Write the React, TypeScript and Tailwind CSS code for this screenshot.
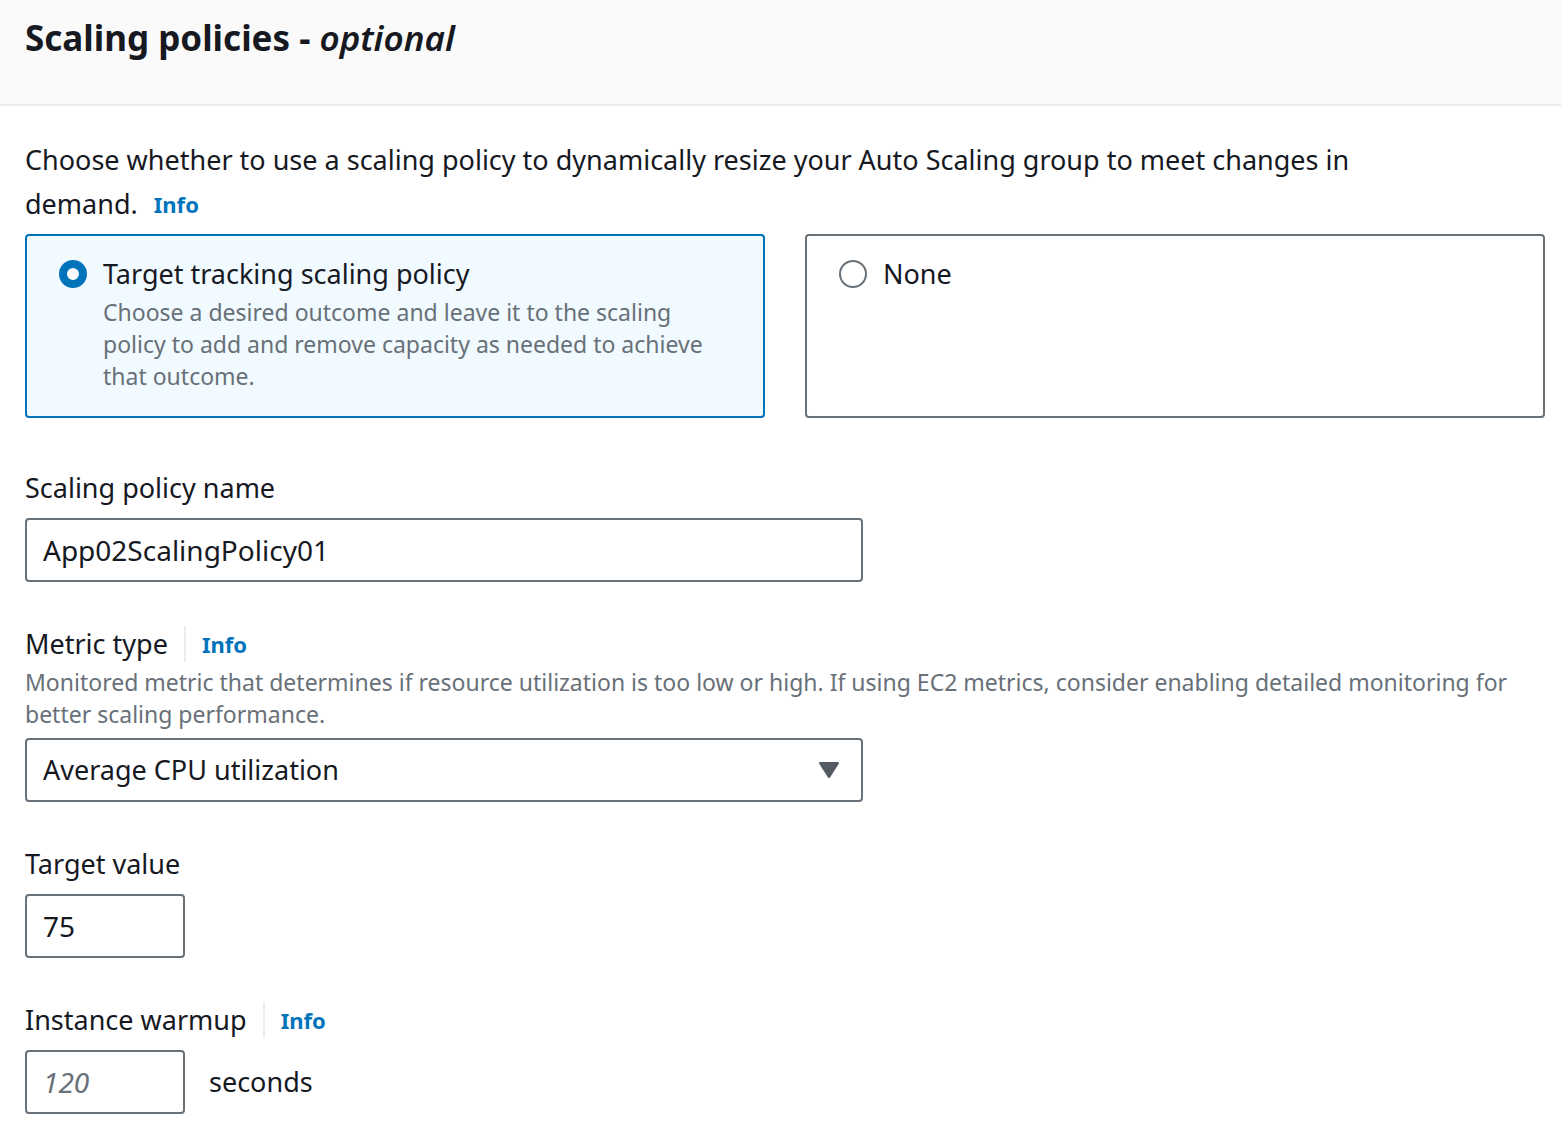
import type { ReactNode } from "react";

const fieldBox =
  "block h-16 rounded-sm border-2 border-[#687078] bg-white px-4 text-[#16191f] outline-none placeholder:text-[#687078] placeholder:italic focus-visible:border-[#0073bb]";

function Info({ topic }: { topic: string }) {
  return (
    <a href={`#${topic}`} className="inline-block text-[22px] font-bold text-[#0073bb] hover:underline">
      Info
    </a>
  );
}

function LabelRow({ htmlFor, topic, children }: { htmlFor: string; topic?: string; children: ReactNode }) {
  return (
    <div className="flex items-center gap-4">
      <label htmlFor={htmlFor}>{children}</label>
      {topic && (
        <div className="flex h-9 items-center border-l-2 border-[#eaeded] pl-4">
          <Info topic={topic} />
        </div>
      )}
    </div>
  );
}

function PolicyOption({
  id,
  title,
  description,
  defaultChecked,
}: {
  id: string;
  title: string;
  description?: string;
  defaultChecked?: boolean;
}) {
  return (
    <label
      htmlFor={id}
      className="flex gap-4 rounded-sm border-2 border-[#687078] px-8 pt-4 pb-6 has-checked:border-[#0073bb] has-checked:bg-[#f1faff]"
    >
      <input
        type="radio"
        name="policy"
        id={id}
        defaultChecked={defaultChecked}
        className="mt-2 size-7 shrink-0 appearance-none rounded-full border-2 border-[#687078] bg-white checked:border-8 checked:border-[#0073bb]"
      />
      <span>
        <span className="block">{title}</span>
        {description && <span className="block text-[23px] leading-8 text-[#687078]">{description}</span>}
      </span>
    </label>
  );
}

export default function App() {
  return (
    <main className="bg-white pb-1 font-['Noto_Sans',sans-serif] text-[27px] leading-11 text-[#16191f]">
      <header className="border-b-2 border-[#eaeded] bg-[#fafafa] px-[25px] pt-4 pb-11">
        <h1 className="text-[35px] leading-11 font-bold">
          Scaling policies - <em className="font-semibold">optional</em>
        </h1>
      </header>
      <form className="flex flex-col gap-10 pt-8 pr-4 pl-[25px]">
        <section className="mb-2">
          <p id="policy-question" className="max-w-[1400px]">
            Choose whether to use a scaling policy to dynamically resize your Auto Scaling group to meet changes in{" "}
            <span className="inline-flex gap-4 align-top">
              <span>demand.</span>
              <Info topic="scaling-policy" />
            </span>
          </p>
          <div role="radiogroup" aria-labelledby="policy-question" className="mt-2 grid grid-cols-2 gap-10">
            <PolicyOption
              id="tracking"
              title="Target tracking scaling policy"
              description="Choose a desired outcome and leave it to the scaling policy to add and remove capacity as needed to achieve that outcome."
              defaultChecked
            />
            <PolicyOption id="none" title="None" />
          </div>
        </section>

        <div className="flex flex-col gap-2">
          <LabelRow htmlFor="name">Scaling policy name</LabelRow>
          <input
            id="name"
            type="text"
            defaultValue="App02ScalingPolicy01"
            className={`${fieldBox} w-full max-w-[838px] text-[28px]`}
          />
        </div>

        <div className="flex flex-col gap-2">
          <div>
            <LabelRow htmlFor="metric" topic="metric-type">
              Metric type
            </LabelRow>
            <p id="metric-hint" className="text-[23px] leading-8 text-[#687078]">
              Monitored metric that determines if resource utilization is too low or high. If using EC2 metrics,
              consider enabling detailed monitoring for better scaling performance.
            </p>
          </div>
          <div className="relative w-full max-w-[838px]">
            <select id="metric" aria-describedby="metric-hint" className={`${fieldBox} w-full appearance-none`}>
              <option>Average CPU utilization</option>
            </select>
            <svg
              aria-hidden="true"
              viewBox="0 0 20 16"
              className="pointer-events-none absolute top-6 right-6 h-4 w-5 fill-[#545b64] stroke-[#545b64]"
            >
              <path d="M1.2 1.2H18.8L10 14.8Z" strokeWidth="2.4" strokeLinejoin="round" />
            </svg>
          </div>
        </div>

        <div className="flex flex-col gap-2">
          <LabelRow htmlFor="target">Target value</LabelRow>
          <input id="target" type="text" inputMode="numeric" defaultValue="75" className={`${fieldBox} w-40 text-[28px]`} />
        </div>

        <div className="flex flex-col gap-2">
          <LabelRow htmlFor="warmup" topic="instance-warmup">
            Instance warmup
          </LabelRow>
          <div className="flex items-center gap-6">
            <input
              id="warmup"
              type="text"
              inputMode="numeric"
              placeholder="120"
              className={`${fieldBox} w-40 text-[28px]`}
            />
            <span>seconds</span>
          </div>
        </div>
      </form>
    </main>
  );
}
